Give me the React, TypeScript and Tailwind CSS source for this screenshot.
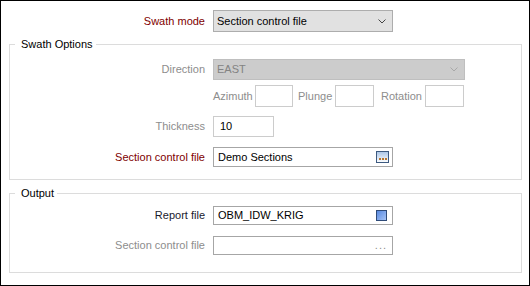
import React from "react";

const labelCls = "w-[195px] text-right shrink-0";

const Chevron = ({ color }: { color: string }) => (
  <svg width="8" height="5" viewBox="0 0 8 5" fill="none">
    <path d="M0.5 0.5 L4 4 L7.5 0.5" stroke={color} strokeWidth="1" />
  </svg>
);

const BrowseIcon = () => (
  <svg width="13" height="12" viewBox="0 0 13 12">
    <defs>
      <linearGradient id="bg1" x1="0" y1="0" x2="0" y2="1">
        <stop offset="0" stopColor="#a9c4e6" />
        <stop offset="1" stopColor="#ffffff" />
      </linearGradient>
    </defs>
    <rect x="0.5" y="0.5" width="12" height="11" fill="url(#bg1)" stroke="#3d5a80" />
    <rect x="3" y="7" width="2" height="2" fill="#b8762e" />
    <rect x="6" y="7" width="2" height="2" fill="#b8762e" />
    <rect x="9" y="7" width="2" height="2" fill="#b8762e" />
  </svg>
);

const ColorIcon = () => (
  <svg width="11" height="11" viewBox="0 0 11 11">
    <defs>
      <linearGradient id="cg1" x1="0" y1="0" x2="1" y2="1">
        <stop offset="0" stopColor="#5486df" />
        <stop offset="1" stopColor="#a9c6f7" />
      </linearGradient>
    </defs>
    <rect x="0.5" y="0.5" width="10" height="10" fill="url(#cg1)" stroke="#2f4b78" />
  </svg>
);

const SmallBox = ({ w }: { w: string }) => (
  <div className={`${w} h-[22px] border border-[#cccccc] bg-white shrink-0`} />
);

export default function App() {
  return (
    <div className="w-[530px] h-[286px] border border-black bg-white font-['Liberation_Sans',sans-serif] text-[11px] text-black overflow-hidden">
      <div className="flex items-center mt-[9px] h-[22px]">
        <div className="w-[204px] text-right text-[#800000] shrink-0">Swath mode</div>
        <div className="ml-[8px] w-[180px] h-[22px] border border-[#adadad] bg-[#e1e1e1] flex items-center justify-between pl-[3px] pr-[6px]">
          <span>Section control file</span>
          <Chevron color="#444444" />
        </div>
      </div>

      <fieldset className="ml-[8px] mt-[6px] w-[513px] border border-[#dcdcdc] pb-[12px]">
        <legend className="ml-[5px] pl-[6px] pr-[3px] leading-[13px]">Swath Options</legend>
        <div className="flex items-center mt-[8px] h-[21px]">
          <div className={`${labelCls} text-[#8d8d8d]`}>Direction</div>
          <div className="ml-[8px] w-[252px] h-[21px] border border-[#bfbfbf] bg-[#cccccc] flex items-center justify-between pl-[3px] pr-[6px] text-[#838383]">
            <span>EAST</span>
            <Chevron color="#a8a8a8" />
          </div>
        </div>
        <div className="flex items-center mt-[5px] h-[22px] pl-[203px] text-[#8d8d8d]">
          <span className="w-[42px] shrink-0">Azimuth</span>
          <SmallBox w="w-[38px]" />
          <span className="w-[42px] pl-[5px] shrink-0">Plunge</span>
          <SmallBox w="w-[39px]" />
          <span className="w-[51px] pl-[7px] shrink-0">Rotation</span>
          <SmallBox w="w-[39px]" />
        </div>
        <div className="flex items-center mt-[9px] h-[21px]">
          <div className={`${labelCls} text-[#8d8d8d]`}>Thickness</div>
          <div className="ml-[8px] w-[61px] h-[21px] border border-[#cccccc] bg-white flex items-center pl-[6px]">
            10
          </div>
        </div>
        <div className="flex items-center mt-[10px] h-[20px]">
          <div className={`${labelCls} text-[#800000]`}>Section control file</div>
          <div className="ml-[8px] w-[180px] h-[20px] border border-[#a6a6a6] bg-white flex items-center justify-between pl-[4px] pr-[3px]">
            <span>Demo Sections</span>
            <BrowseIcon />
          </div>
        </div>
      </fieldset>

      <fieldset className="ml-[8px] mt-[7px] w-[513px] border border-[#dcdcdc] pb-[17px]">
        <legend className="ml-[5px] pl-[6px] pr-[3px] leading-[13px]">Output</legend>
        <div className="flex items-center mt-[6px] h-[19px]">
          <div className={`${labelCls} text-[#1a1a2e]`}>Report file</div>
          <div className="ml-[8px] w-[180px] h-[19px] border border-[#a6a6a6] bg-white flex items-center justify-between pl-[4px] pr-[5px]">
            <span>OBM_IDW_KRIG</span>
            <ColorIcon />
          </div>
        </div>
        <div className="flex items-center mt-[11px] h-[19px]">
          <div className={`${labelCls} text-[#8d8d8d]`}>Section control file</div>
          <div className="ml-[8px] w-[180px] h-[19px] border border-[#a6a6a6] bg-white flex items-center justify-end pr-[5px] text-[#8d8d8d] tracking-[1px]">
            ...
          </div>
        </div>
      </fieldset>
    </div>
  );
}
